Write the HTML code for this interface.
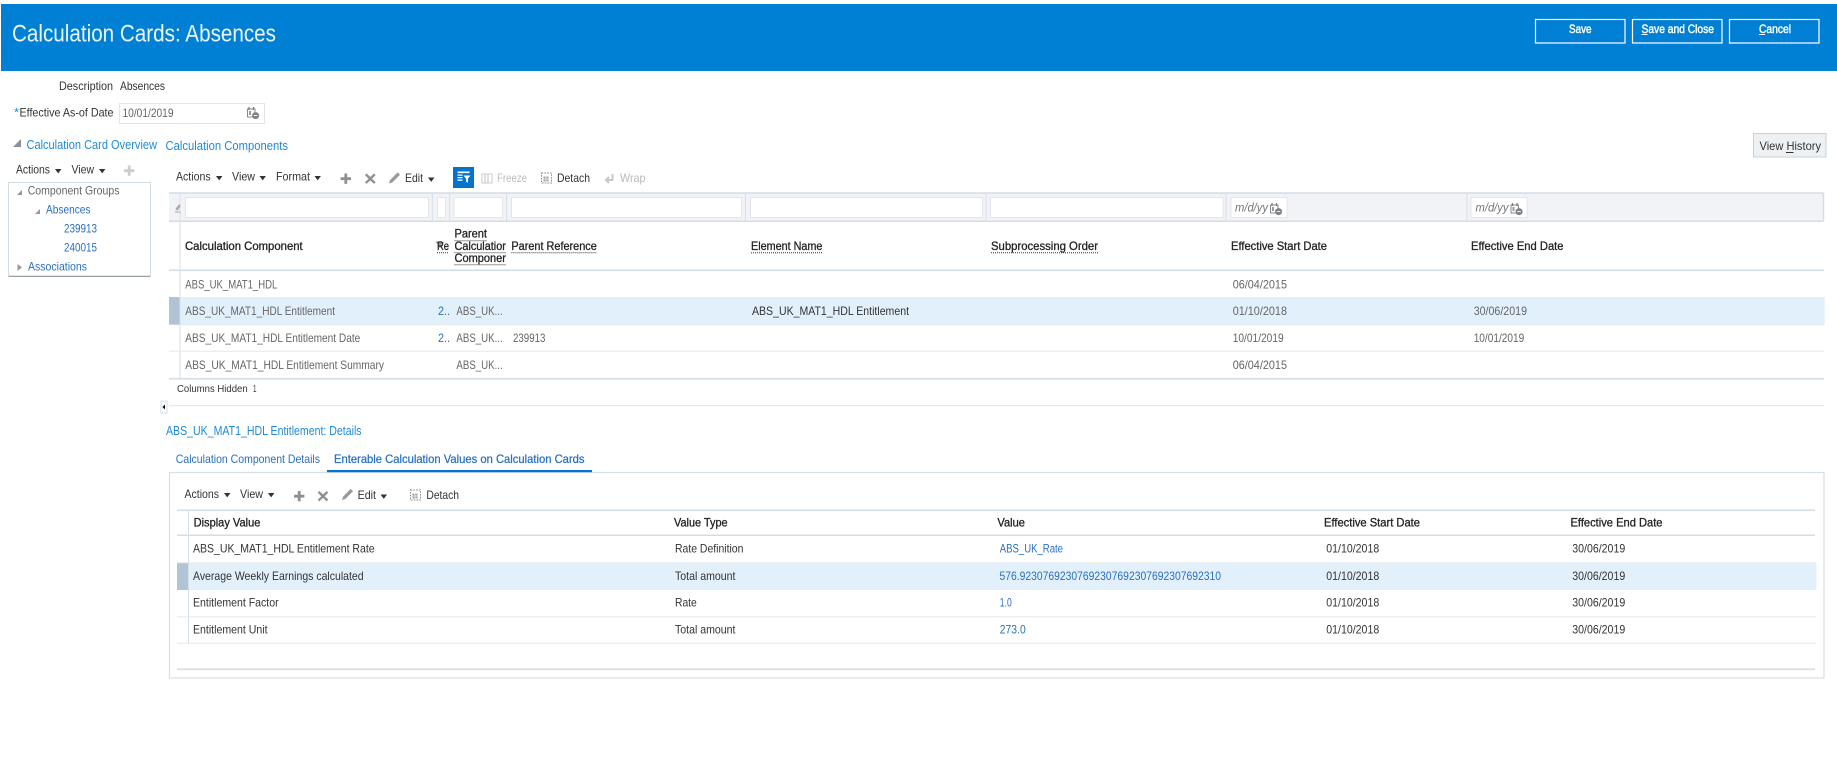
<!DOCTYPE html>
<html lang="en">
<head>
<meta charset="utf-8">
<title>Calculation Cards: Absences</title>
<style>
html,body{margin:0;padding:0;background:#fff;width:1837px;height:762px;overflow:hidden}
svg{display:block;font-family:"Liberation Sans",sans-serif;filter:blur(.35px)}
text{font-size:12px;fill:#444}
.d{fill:#333}
.g{fill:#666}
.b{fill:#2a6fc0}
.l{fill:#1f8ad8;font-size:13px}
.h{fill:#222;stroke:#222;stroke-width:.3}
.o{fill:#bbb}
.w{fill:#fff;stroke:#fff;stroke-width:.45}
.i{fill:#777;font-style:italic}
.dot{stroke:#333;stroke-width:1;stroke-dasharray:1 1;fill:none}
.ln{stroke:#d6dfe6;stroke-width:1;fill:none}
.lt{stroke:#e6eaee;stroke-width:1;fill:none}
.lk{stroke:#d3dde6;stroke-width:1.5;fill:none}
.inp{fill:#fff;stroke:#e2e6ea;stroke-width:1}
</style>
</head>
<body>
<svg width="1837" height="762" viewBox="0 0 1837 762" xmlns="http://www.w3.org/2000/svg">
<defs>
<path id="caret" d="M0 0h6.4l-3.2 4.4z" fill="#333"/>
<path id="plus" d="M3.8 0h2.8v3.8h3.8v2.8H6.6v3.8H3.8V6.6H0V3.8h3.8z" fill="#8c9196"/>
<path id="cross" d="M1.6 0L5.3 3.4 9 0l1.6 1.6L7 5.2l3.6 3.6L9 10.4 5.3 6.9 1.6 10.4 0 8.8l3.6-3.6L0 1.6z" fill="#8c9196"/>
<path id="pencil" d="M0 11.5l1-3.3L8.6.4l2.4 2.4-7.7 7.7z" fill="#999"/>
<g id="detach"><rect x=".5" y=".5" width="10" height="10" fill="none" stroke="#888" stroke-width="1" stroke-dasharray="1.6 1.2"/><rect x="2.5" y="4" width="5" height="5" fill="#999"/><path d="M4.2 4v5M5.9 4v5M2.5 6.5h5" stroke="#fff" stroke-width=".6"/></g>
<g id="cal"><path d="M.5 2h7.5v8H.5z" fill="#fff" stroke="#888" stroke-width="1"/><path d="M2 0v3M6.5 0v3" stroke="#777" stroke-width="1.2"/><rect x="2" y="4" width="2" height="4" fill="#999"/><circle cx="8.6" cy="8.6" r="3.5" fill="#7c8288"/><path d="M6.8 8.6h3.6" stroke="#fff" stroke-width=".9"/></g>
</defs>

<!-- Page header -->
<rect x="1" y="4" width="1836" height="67" fill="#0080d4"/>
<text x="12" y="41.5" style="font-size:24px;fill:#eaf5fc" textLength="264" lengthAdjust="spacingAndGlyphs">Calculation Cards: Absences</text>
<rect x="1535.5" y="19.5" width="89.5" height="23.5" fill="none" stroke="#fff" stroke-width="1.2"/>
<rect x="1632.5" y="19.5" width="89.5" height="23.5" fill="none" stroke="#fff" stroke-width="1.2"/>
<rect x="1729.5" y="19.5" width="89.5" height="23.5" fill="none" stroke="#fff" stroke-width="1.2"/>
<text class="w" x="1569" y="33" textLength="22.5" lengthAdjust="spacingAndGlyphs">Save</text>
<text class="w" x="1641.5" y="33" textLength="72.5" lengthAdjust="spacingAndGlyphs">Save and Close</text>
<text class="w" x="1759" y="33" textLength="32" lengthAdjust="spacingAndGlyphs">Cancel</text>
<path d="M1641.5 34.5h6M1759 34.5h6" stroke="#fff" stroke-width="1"/>

<!-- Form -->
<text class="d" x="59" y="90" textLength="54" lengthAdjust="spacingAndGlyphs">Description</text>
<text class="d" x="120" y="90" textLength="45" lengthAdjust="spacingAndGlyphs">Absences</text>
<text x="14" y="116.7" style="fill:#1f8ad8" textLength="5" lengthAdjust="spacingAndGlyphs">*</text>
<text class="d" x="19.5" y="116.7" textLength="94" lengthAdjust="spacingAndGlyphs">Effective As-of Date</text>
<rect class="inp" x="119.5" y="103.5" width="145" height="20"/>
<text class="g" x="122.5" y="117" textLength="51" lengthAdjust="spacingAndGlyphs">10/01/2019</text>
<use href="#cal" x="247" y="107"/>

<path d="M13 147l8-8v8z" fill="#8a8f94"/>
<text class="l" x="26.5" y="149" textLength="130.5" lengthAdjust="spacingAndGlyphs">Calculation Card Overview</text>
<text class="l" x="165.5" y="150" textLength="122.5" lengthAdjust="spacingAndGlyphs">Calculation Components</text>

<rect x="1753.5" y="133.5" width="72.5" height="23.5" fill="#eef1f4" stroke="#c6d1da" stroke-width="1"/>
<text class="d" x="1759.5" y="150" textLength="61.5" lengthAdjust="spacingAndGlyphs">View History</text>
<path d="M1786 152.5h7.5" stroke="#333" stroke-width="1"/>

<!-- Tree -->
<text class="d" x="16" y="173.7" textLength="34" lengthAdjust="spacingAndGlyphs">Actions</text>
<use href="#caret" x="55" y="169"/>
<text class="d" x="71.5" y="173.7" textLength="22.5" lengthAdjust="spacingAndGlyphs">View</text>
<use href="#caret" x="99" y="169"/>
<use href="#plus" x="124" y="165.5" opacity=".45"/>
<path d="M8.5 276V182.5H150.5V276" fill="none" stroke="#d3dce4" stroke-width="1"/>
<path d="M8.5 276.3H150.5" stroke="#8a949c" stroke-width="1.2"/>
<path d="M17 195l5-5v5z" fill="#999"/>
<text class="g" x="27.7" y="194.7" textLength="91.8" lengthAdjust="spacingAndGlyphs">Component Groups</text>
<path d="M35 214l5-5v5z" fill="#999"/>
<text class="b" x="46" y="213.7" textLength="44.5" lengthAdjust="spacingAndGlyphs">Absences</text>
<text class="b" x="64" y="232.7" textLength="33" lengthAdjust="spacingAndGlyphs">239913</text>
<text class="b" x="64" y="251.7" textLength="33" lengthAdjust="spacingAndGlyphs">240015</text>
<path d="M17.5 264l4.5 3.5-4.5 3.5z" fill="#999"/>
<text class="b" x="28" y="270.7" textLength="59" lengthAdjust="spacingAndGlyphs">Associations</text>

<!-- Main toolbar -->
<text class="d" x="176" y="180.7" textLength="34.6" lengthAdjust="spacingAndGlyphs">Actions</text>
<use href="#caret" x="216" y="176"/>
<text class="d" x="232" y="180.7" textLength="23" lengthAdjust="spacingAndGlyphs">View</text>
<use href="#caret" x="259.5" y="176"/>
<text class="d" x="276" y="180.7" textLength="34" lengthAdjust="spacingAndGlyphs">Format</text>
<use href="#caret" x="314.5" y="176"/>
<use href="#plus" x="340.6" y="173.5"/>
<use href="#cross" x="365" y="173.5"/>
<use href="#pencil" x="389" y="172"/>
<text class="d" x="405" y="182" textLength="18" lengthAdjust="spacingAndGlyphs">Edit</text>
<use href="#caret" x="428" y="177.5"/>
<rect x="453" y="167" width="21" height="21" fill="#0572ce"/>
<path d="M457.5 171.5h12v1.6h-12zM457.5 174.5h5v1.2h-5zM457.5 177h5v1.2h-5zM457.5 179.5h5v1.2h-5z" fill="#fff"/>
<path d="M463.5 175.5h7l-2.6 3.2v4l-1.8-1v-3z" fill="#fff"/>
<rect x="482" y="174" width="10" height="9" fill="none" stroke="#ccc" stroke-width="1"/>
<path d="M485 174v9M488 174v9" stroke="#ccc" stroke-width="1.2"/>
<text class="o" x="497" y="182" textLength="30" lengthAdjust="spacingAndGlyphs">Freeze</text>
<use href="#detach" x="541" y="172.5"/>
<text class="d" x="557" y="182" textLength="33" lengthAdjust="spacingAndGlyphs">Detach</text>
<path d="M612.5 174v6h-6M609 177l-3 3 3 3" fill="none" stroke="#c8c8c8" stroke-width="2"/>
<text class="o" x="620" y="182" textLength="25.5" lengthAdjust="spacingAndGlyphs">Wrap</text>

<!-- Filter row -->
<rect x="169" y="193" width="1654.5" height="28.3" fill="#f1f3f7"/>
<path class="lk" d="M169 193H1823.5M169 221.3H1823.5M1823.5 193V221.3"/>
<path class="ln" d="M180 193V221M432.3 193V221M449.7 193V221M506.6 193V221M745.4 193V221M986 193V221M1226 193V221M1467 193V221"/>
<rect class="inp" x="185.5" y="197.5" width="243" height="20"/>
<rect class="inp" x="437.5" y="197.5" width="8" height="20"/>
<rect class="inp" x="454" y="197.5" width="48.7" height="20"/>
<rect class="inp" x="511.5" y="197.5" width="230" height="20"/>
<rect class="inp" x="750.5" y="197.5" width="232" height="20"/>
<rect class="inp" x="990.5" y="197.5" width="232.5" height="20"/>
<rect class="inp" x="1231" y="197.5" width="56" height="20"/>
<rect class="inp" x="1471" y="197.5" width="56" height="20"/>
<path d="M175 212h5.5M176 209l3-4 1 1-2.5 4z" stroke="#aaa" stroke-width="1" fill="#aaa"/>
<text class="i" x="1235" y="211.5" textLength="33" lengthAdjust="spacingAndGlyphs">m/d/yy</text>
<use href="#cal" x="1270" y="203"/>
<text class="i" x="1475.5" y="211.5" textLength="33" lengthAdjust="spacingAndGlyphs">m/d/yy</text>
<use href="#cal" x="1510.5" y="203"/>

<!-- Main table -->
<rect x="180" y="297" width="1644.7" height="27.7" fill="#e2f0fc"/>
<rect x="169" y="297" width="11" height="27.7" fill="#b0c4d6"/>
<path class="ln" d="M180 221V378"/>
<path class="lk" d="M169 270.3H1824"/>
<path class="lt" d="M169 351.3H1824"/>
<path class="lt" d="M180 324.7H1824"/>
<path class="lk" d="M169 378.7H1824"/>

<text class="h" x="185" y="250" textLength="117.7" lengthAdjust="spacingAndGlyphs">Calculation Component</text>
<path d="M435 241.7h9.6l-3.2 3v2.8h-3v-2.8z" fill="#999"/>
<text class="h" x="437" y="250" textLength="12" lengthAdjust="spacingAndGlyphs">Re</text>
<path class="dot" d="M437 252.7h12"/>
<text class="h" x="454.5" y="237.7" textLength="32.5" lengthAdjust="spacingAndGlyphs">Parent</text>
<path class="dot" d="M454.5 240.7h32.5"/>
<text class="h" x="454.5" y="250" textLength="51.4" lengthAdjust="spacingAndGlyphs">Calculatior</text>
<path class="dot" d="M454.5 252.7h51.4"/>
<text class="h" x="454.5" y="262" textLength="51.4" lengthAdjust="spacingAndGlyphs">Componer</text>
<path class="dot" d="M454.5 264.7h51.4"/>
<text class="h" x="511.4" y="250" textLength="85.4" lengthAdjust="spacingAndGlyphs">Parent Reference</text>
<path class="dot" d="M511.4 252.7h85.4"/>
<text class="h" x="751" y="250" textLength="71.4" lengthAdjust="spacingAndGlyphs">Element Name</text>
<path class="dot" d="M751 252.7h71.4"/>
<text class="h" x="991" y="250" textLength="107" lengthAdjust="spacingAndGlyphs">Subprocessing Order</text>
<path class="dot" d="M991 252.7h107"/>
<text class="h" x="1231" y="250" textLength="96" lengthAdjust="spacingAndGlyphs">Effective Start Date</text>
<text class="h" x="1471" y="250" textLength="92.5" lengthAdjust="spacingAndGlyphs">Effective End Date</text>

<text class="g" x="185.3" y="288.3" textLength="92" lengthAdjust="spacingAndGlyphs">ABS_UK_MAT1_HDL</text>
<text class="g" x="1232.7" y="288.3" textLength="54.3" lengthAdjust="spacingAndGlyphs">06/04/2015</text>

<text class="g" x="185.3" y="315" textLength="149.7" lengthAdjust="spacingAndGlyphs">ABS_UK_MAT1_HDL Entitlement</text>
<text class="b" x="438" y="315" textLength="12" lengthAdjust="spacingAndGlyphs">2..</text>
<text class="g" x="456.4" y="315" textLength="46.3" lengthAdjust="spacingAndGlyphs">ABS_UK...</text>
<text class="d" x="752" y="315" textLength="157" lengthAdjust="spacingAndGlyphs">ABS_UK_MAT1_HDL Entitlement</text>
<text class="g" x="1232.7" y="315" textLength="54.3" lengthAdjust="spacingAndGlyphs">01/10/2018</text>
<text class="g" x="1473.7" y="315" textLength="53.3" lengthAdjust="spacingAndGlyphs">30/06/2019</text>

<text class="g" x="185.3" y="342" textLength="175" lengthAdjust="spacingAndGlyphs">ABS_UK_MAT1_HDL Entitlement Date</text>
<text class="b" x="438" y="342" textLength="12" lengthAdjust="spacingAndGlyphs">2..</text>
<text class="g" x="456.4" y="342" textLength="46.3" lengthAdjust="spacingAndGlyphs">ABS_UK...</text>
<text class="g" x="513" y="342" textLength="32.4" lengthAdjust="spacingAndGlyphs">239913</text>
<text class="g" x="1232.7" y="342" textLength="51" lengthAdjust="spacingAndGlyphs">10/01/2019</text>
<text class="g" x="1473.7" y="342" textLength="50.5" lengthAdjust="spacingAndGlyphs">10/01/2019</text>

<text class="g" x="185.3" y="369" textLength="198.7" lengthAdjust="spacingAndGlyphs">ABS_UK_MAT1_HDL Entitlement Summary</text>
<text class="g" x="456.4" y="369" textLength="46.3" lengthAdjust="spacingAndGlyphs">ABS_UK...</text>
<text class="g" x="1232.7" y="369" textLength="54.3" lengthAdjust="spacingAndGlyphs">06/04/2015</text>

<text class="d" x="177" y="392" style="font-size:10.5px" textLength="70.7" lengthAdjust="spacingAndGlyphs">Columns Hidden</text>
<text class="d" x="253" y="392" style="font-size:10.5px" textLength="3.5" lengthAdjust="spacingAndGlyphs">1</text>

<!-- Splitter -->
<path d="M169 405.7H1824" stroke="#dbe3ea" stroke-width="1"/>
<rect x="161" y="401" width="6" height="12" fill="#fff" stroke="#d3dce4" stroke-width="1"/>
<path d="M165 404.5v5l-2.6-2.5z" fill="#111"/>

<!-- Details -->
<text class="l" x="166" y="435" textLength="195.6" lengthAdjust="spacingAndGlyphs">ABS_UK_MAT1_HDL Entitlement: Details</text>
<text class="b" x="175.8" y="463" textLength="144.2" lengthAdjust="spacingAndGlyphs">Calculation Component Details</text>
<text class="b" x="334" y="463" style="stroke:#2a6fc0;stroke-width:.25" textLength="250.5" lengthAdjust="spacingAndGlyphs">Enterable Calculation Values on Calculation Cards</text>
<rect x="169.5" y="472.5" width="1654.5" height="205.5" fill="none" stroke="#d6dfe6" stroke-width="1.2"/>
<rect x="327" y="470" width="265" height="2.2" fill="#0572ce"/>

<text class="d" x="184.5" y="498" textLength="34.5" lengthAdjust="spacingAndGlyphs">Actions</text>
<use href="#caret" x="224" y="493"/>
<text class="d" x="240" y="498" textLength="23" lengthAdjust="spacingAndGlyphs">View</text>
<use href="#caret" x="268" y="493"/>
<use href="#plus" x="294" y="491"/>
<use href="#cross" x="317.7" y="491"/>
<use href="#pencil" x="342" y="488.5"/>
<text class="d" x="357.6" y="499" textLength="18.4" lengthAdjust="spacingAndGlyphs">Edit</text>
<use href="#caret" x="380.6" y="494.5"/>
<use href="#detach" x="410" y="489.5"/>
<text class="d" x="426.4" y="499" textLength="32.6" lengthAdjust="spacingAndGlyphs">Detach</text>

<rect x="188.5" y="562.7" width="1628" height="27.3" fill="#e2f0fc"/>
<rect x="177" y="562.7" width="11.5" height="27.3" fill="#b0c4d6"/>
<path class="lk" d="M177 510.3H1815M177 535.3H1815"/>
<path class="ln" d="M188.5 510V643"/>
<path class="lt" d="M177 562.7H1816M177 616.7H1816M177 643.3H1816"/>
<path class="lk" d="M177 669.3H1815"/>

<text class="h" x="193.6" y="526.7" textLength="66.8" lengthAdjust="spacingAndGlyphs">Display Value</text>
<text class="h" x="674" y="526.7" textLength="53.6" lengthAdjust="spacingAndGlyphs">Value Type</text>
<text class="h" x="997.4" y="526.7" textLength="27.6" lengthAdjust="spacingAndGlyphs">Value</text>
<text class="h" x="1324" y="526.7" textLength="96" lengthAdjust="spacingAndGlyphs">Effective Start Date</text>
<text class="h" x="1570.5" y="526.7" textLength="92" lengthAdjust="spacingAndGlyphs">Effective End Date</text>

<text class="d" x="193" y="552.7" textLength="181.6" lengthAdjust="spacingAndGlyphs">ABS_UK_MAT1_HDL Entitlement Rate</text>
<text class="d" x="675" y="552.7" textLength="68.4" lengthAdjust="spacingAndGlyphs">Rate Definition</text>
<text class="b" x="999.8" y="552.7" textLength="63.2" lengthAdjust="spacingAndGlyphs">ABS_UK_Rate</text>
<text class="d" x="1326.3" y="552.7" textLength="52.9" lengthAdjust="spacingAndGlyphs">01/10/2018</text>
<text class="d" x="1572.3" y="552.7" textLength="52.9" lengthAdjust="spacingAndGlyphs">30/06/2019</text>

<text class="d" x="193" y="580" textLength="170.6" lengthAdjust="spacingAndGlyphs">Average Weekly Earnings calculated</text>
<text class="d" x="675" y="580" textLength="60.5" lengthAdjust="spacingAndGlyphs">Total amount</text>
<text class="b" x="999.5" y="580" textLength="221.5" lengthAdjust="spacingAndGlyphs">576.92307692307692307692307692307692310</text>
<text class="d" x="1326.3" y="580" textLength="52.9" lengthAdjust="spacingAndGlyphs">01/10/2018</text>
<text class="d" x="1572.3" y="580" textLength="52.9" lengthAdjust="spacingAndGlyphs">30/06/2019</text>

<text class="d" x="193" y="606.7" textLength="85.6" lengthAdjust="spacingAndGlyphs">Entitlement Factor</text>
<text class="d" x="675" y="606.7" textLength="21.8" lengthAdjust="spacingAndGlyphs">Rate</text>
<text class="b" x="999.8" y="606.7" textLength="12" lengthAdjust="spacingAndGlyphs">1.0</text>
<text class="d" x="1326.3" y="606.7" textLength="52.9" lengthAdjust="spacingAndGlyphs">01/10/2018</text>
<text class="d" x="1572.3" y="606.7" textLength="52.9" lengthAdjust="spacingAndGlyphs">30/06/2019</text>

<text class="d" x="193" y="633.7" textLength="74.5" lengthAdjust="spacingAndGlyphs">Entitlement Unit</text>
<text class="d" x="675" y="633.7" textLength="60.5" lengthAdjust="spacingAndGlyphs">Total amount</text>
<text class="b" x="999.8" y="633.7" textLength="25.9" lengthAdjust="spacingAndGlyphs">273.0</text>
<text class="d" x="1326.3" y="633.7" textLength="52.9" lengthAdjust="spacingAndGlyphs">01/10/2018</text>
<text class="d" x="1572.3" y="633.7" textLength="52.9" lengthAdjust="spacingAndGlyphs">30/06/2019</text>
</svg>
</body>
</html>
